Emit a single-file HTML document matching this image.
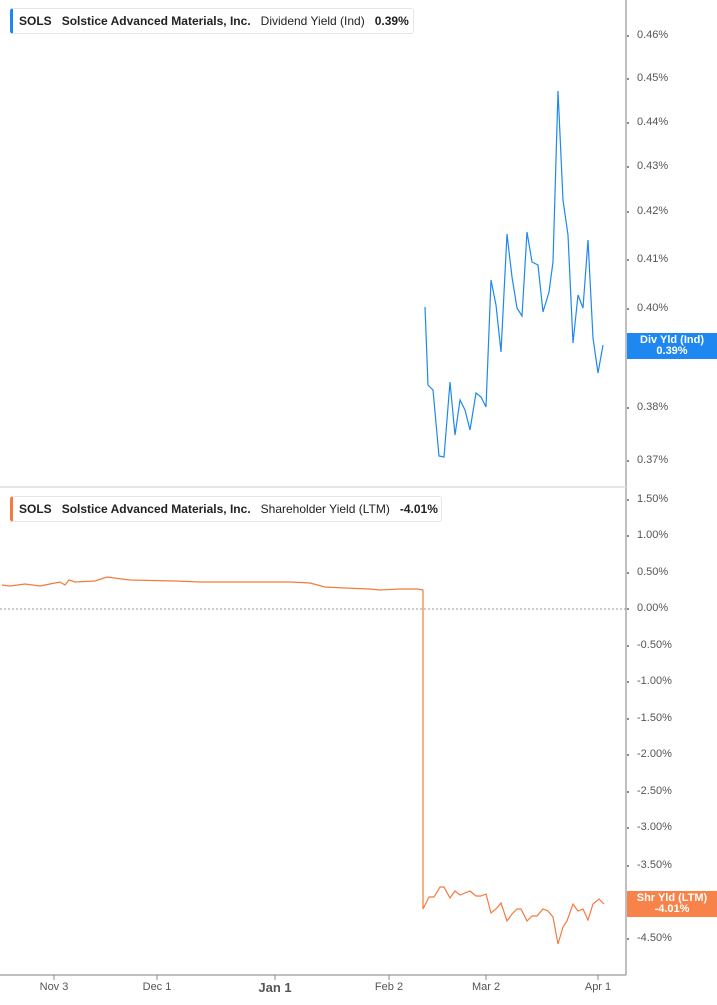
<!DOCTYPE html>
<html><head><meta charset="utf-8"><style>
body{margin:0;width:717px;height:1005px;background:#fff;font-family:"Liberation Sans",Arial,sans-serif;position:relative;overflow:hidden}
.leg{position:absolute;left:10px;height:24px;border:1px solid #e6e6e6;border-left:3px solid #1e88f0;border-radius:3px;background:#fff;font-size:12px;line-height:24px;color:#222;padding-left:6px;white-space:nowrap}
.leg b{font-weight:bold}
.yl{position:absolute;left:637px;font-size:11px;color:#555}
.xl{position:absolute;top:981px;font-size:11px;color:#555;transform:translateX(-50%)}
.tag{position:absolute;left:627px;width:90px;color:#fff;font-size:11px;font-weight:bold;text-align:center;line-height:11px;padding:2px 0}
</style></head><body>
<svg width="717" height="1005" style="position:absolute;left:0;top:0">
<line x1="626" y1="0" x2="626" y2="975" stroke="#aaa" stroke-width="1.5"/>
<line x1="0" y1="487" x2="626" y2="487" stroke="#ddd" stroke-width="1.5"/>
<line x1="0" y1="975" x2="626" y2="975" stroke="#aaa" stroke-width="1.5"/>
<line x1="0" y1="609" x2="626" y2="609" stroke="#999" stroke-dasharray="2,2"/>
<g stroke="#888">
<line x1="54" y1="975" x2="54" y2="980"/><line x1="157" y1="975" x2="157" y2="980"/><line x1="275" y1="975" x2="275" y2="980"/><line x1="389" y1="975" x2="389" y2="980"/><line x1="486" y1="975" x2="486" y2="980"/><line x1="598" y1="975" x2="598" y2="980"/>
</g>
<g fill="#666">
<circle cx="628" cy="36" r="1"/><circle cx="628" cy="79" r="1"/><circle cx="628" cy="123" r="1"/><circle cx="628" cy="167" r="1"/><circle cx="628" cy="212" r="1"/><circle cx="628" cy="260" r="1"/><circle cx="628" cy="309" r="1"/><circle cx="628" cy="408" r="1"/><circle cx="628" cy="461" r="1"/>
<circle cx="628" cy="500" r="1"/><circle cx="628" cy="536" r="1"/><circle cx="628" cy="573" r="1"/><circle cx="628" cy="609" r="1"/><circle cx="628" cy="646" r="1"/><circle cx="628" cy="682" r="1"/><circle cx="628" cy="719" r="1"/><circle cx="628" cy="755" r="1"/><circle cx="628" cy="792" r="1"/><circle cx="628" cy="828" r="1"/><circle cx="628" cy="866" r="1"/><circle cx="628" cy="939" r="1"/>
</g>
<polyline fill="none" stroke="#1e88f0" stroke-width="1.2" points="425,307 428,385 433,390 439,456 444,457 450,382 455,435 460,400 465,410 470,430 476,393 481,397 486,407 491,280 496,305 501,352 507,234 512,277 517,308 522,316 527,232 532,262 538,265 543,312 549,292 553,262 558,91 563,200 568,235 573,343 578,295 583,308 588,240 593,338 598,373 603,345"/>
<polyline fill="none" stroke="#f47a3e" stroke-width="1.2" points="2,585 10,586 25,584 40,586 50,584 60,582 65,585 69,580 75,582 95,581 107,577 130,580 175,581 200,582 230,582 260,582 290,582 310,583 325,587 345,588 370,589 380,590 400,589 418,589 423,590 423,909 429,897 434,897 440,887 444,887 450,898 455,891 460,895 465,893 470,891 476,896 481,896 486,894 491,913 496,909 501,903 507,921 512,914 517,909 521,909 527,921 532,916 537,916 543,909 548,911 553,917 558,944 563,927 567,921 573,904 578,911 583,909 588,920 593,904 599,899 604,904"/>
</svg>
<div class="leg" style="top:8px;width:394px"><b>SOLS</b>&nbsp;&nbsp;&nbsp;<b>Solstice Advanced Materials, Inc.</b>&nbsp;&nbsp;&nbsp;Dividend Yield (Ind)&nbsp;&nbsp;&nbsp;<b>0.39%</b></div>
<div class="leg" style="top:496px;width:422px;border-left-color:#f47a3e"><b>SOLS</b>&nbsp;&nbsp;&nbsp;<b>Solstice Advanced Materials, Inc.</b>&nbsp;&nbsp;&nbsp;Shareholder Yield (LTM)&nbsp;&nbsp;&nbsp;<b>-4.01%</b></div>
<div class="yl" style="top:29px">0.46%</div><div class="yl" style="top:72px">0.45%</div><div class="yl" style="top:116px">0.44%</div><div class="yl" style="top:160px">0.43%</div><div class="yl" style="top:205px">0.42%</div><div class="yl" style="top:253px">0.41%</div><div class="yl" style="top:302px">0.40%</div><div class="yl" style="top:350px">0.39%</div><div class="yl" style="top:401px">0.38%</div><div class="yl" style="top:454px">0.37%</div>
<div class="yl" style="top:493px">1.50%</div><div class="yl" style="top:529px">1.00%</div><div class="yl" style="top:566px">0.50%</div><div class="yl" style="top:602px">0.00%</div><div class="yl" style="top:639px">-0.50%</div><div class="yl" style="top:675px">-1.00%</div><div class="yl" style="top:712px">-1.50%</div><div class="yl" style="top:748px">-2.00%</div><div class="yl" style="top:785px">-2.50%</div><div class="yl" style="top:821px">-3.00%</div><div class="yl" style="top:859px">-3.50%</div><div class="yl" style="top:895px">-4.00%</div><div class="yl" style="top:932px">-4.50%</div>
<div class="tag" style="top:333px;background:#1e88f0">Div Yld (Ind)<br>0.39%</div>
<div class="tag" style="top:891px;background:#f7834a">Shr Yld (LTM)<br>-4.01%</div>
<div class="xl" style="left:54px">Nov 3</div><div class="xl" style="left:157px">Dec 1</div><div class="xl" style="left:275px;font-weight:bold;font-size:13px;top:980px">Jan 1</div><div class="xl" style="left:389px">Feb 2</div><div class="xl" style="left:486px">Mar 2</div><div class="xl" style="left:598px">Apr 1</div>
</body></html>
